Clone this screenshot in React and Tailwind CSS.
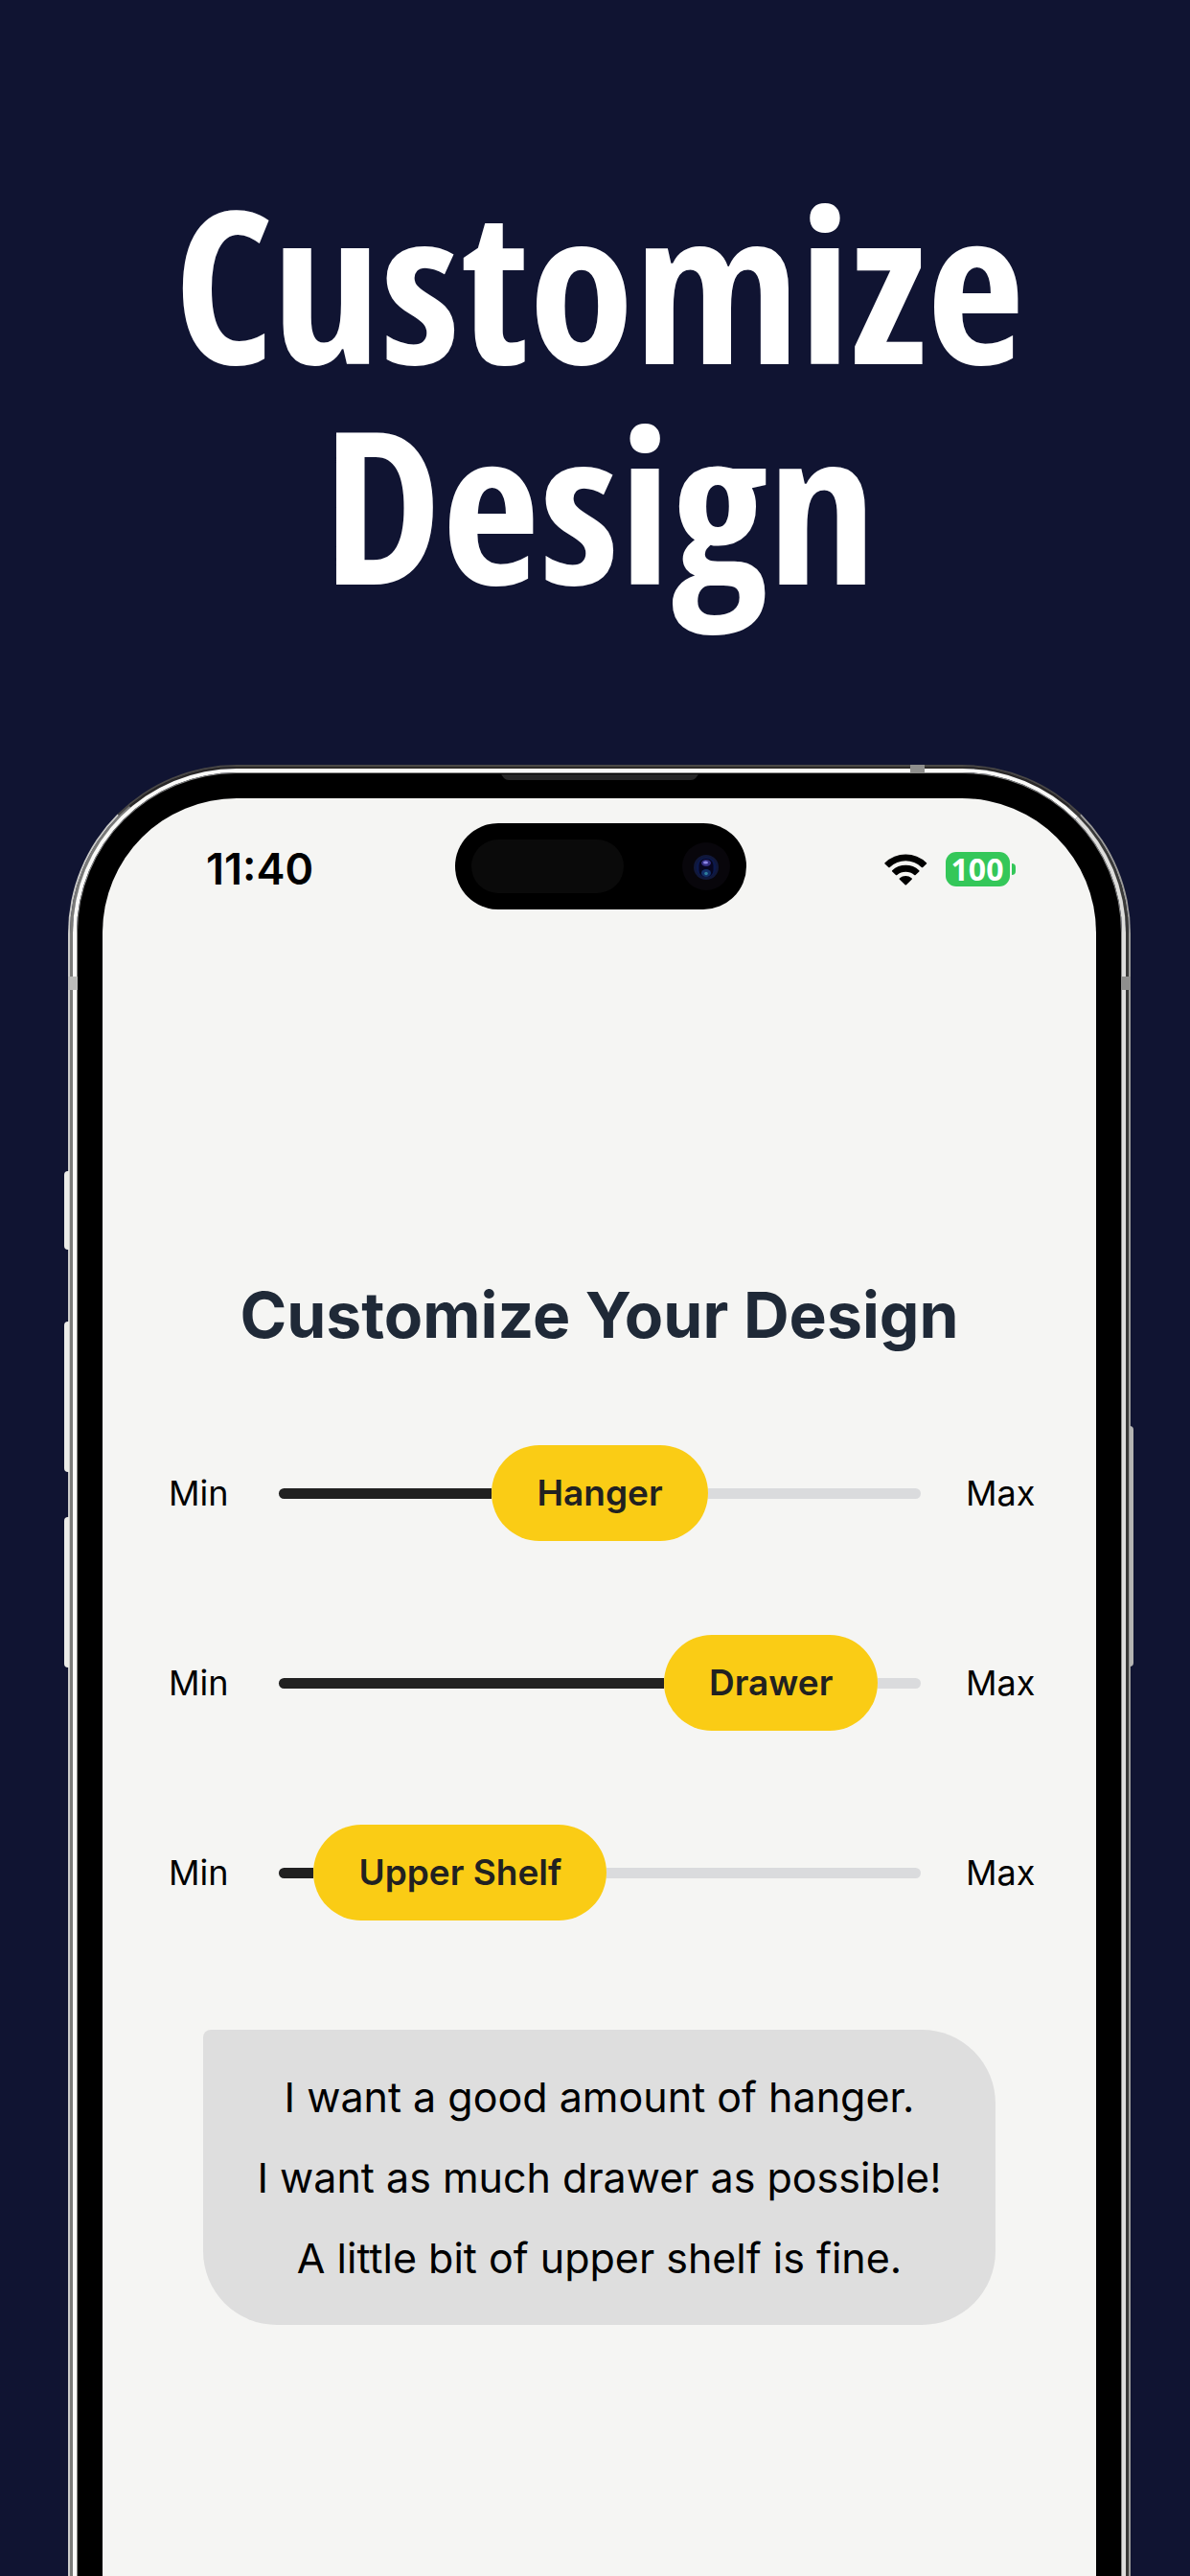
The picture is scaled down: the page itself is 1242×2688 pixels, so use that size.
import React, { useState } from 'react';

const phrases = (name, value) => {
  if (value >= 75) return `I want as much ${name} as possible!`;
  if (value >= 30) return `I want a good amount of ${name}.`;
  return `A little bit of ${name} is fine.`;
};

function WifiIcon() {
  return (
    <svg width="45" height="33" viewBox="0 0 45 33" fill="#000" aria-hidden="true">
      <path d="M0.6 9.2 A31 31 0 0 1 43.9 9.2 Q44.6 9.9 43.9 10.6 L40.2 13.9 Q39.5 14.5 38.8 13.9 A24 24 0 0 0 5.7 13.9 Q5 14.5 4.3 13.9 L0.6 10.6 Q-0.1 9.9 0.6 9.2 Z" />
      <path d="M8.2 17.2 A20.5 20.5 0 0 1 36.3 17.2 Q37 17.9 36.3 18.6 L32.6 21.9 Q31.9 22.5 31.2 21.9 A14 14 0 0 0 13.3 21.9 Q12.6 22.5 11.9 21.9 L8.2 18.6 Q7.5 17.9 8.2 17.2 Z" />
      <path d="M16 25.3 A10 10 0 0 1 28.5 25.3 Q29.3 26 28.6 26.7 L23 32.3 Q22.3 32.9 21.6 32.3 L15.9 26.7 Q15.2 26 16 25.3 Z" />
    </svg>
  );
}

function StatusBar() {
  return (
    <div className="grid grid-cols-[1fr_304px_1fr] items-center pl-[2px]">
      <div className="pt-[6px] pl-[106px] text-[45px] leading-[52px] font-semibold text-black">11:40</div>

      {/* Dynamic island */}
      <div className="flex h-[90px] items-center justify-between rounded-full bg-black px-[17px]">
        <div className="h-[56px] w-[159px] rounded-full bg-[#0a0a0a]"></div>
        <div className="flex size-[50px] items-center justify-center rounded-full bg-[#08060b]">
          <svg width="28" height="28" viewBox="0 0 28 28" aria-hidden="true">
            <circle cx="14" cy="15" r="13" fill="#11183a" />
            <circle cx="14" cy="15" r="10.5" fill="#0c194c" />
            <rect x="6.5" y="6" width="15" height="19" rx="7" fill="#07061f" />
            <ellipse cx="14" cy="10.5" rx="5" ry="3.5" fill="#332e80" />
            <ellipse cx="13.5" cy="10" rx="2.5" ry="1.5" fill="#8d86e6" />
            <ellipse cx="14" cy="21" rx="5" ry="4" fill="#12306a" />
            <circle cx="14" cy="21.5" r="1.8" fill="#2f7f9c" />
          </svg>
        </div>
      </div>

      <div className="flex items-center pt-[6px] pl-[144px]">
        <WifiIcon />
        <div className="ml-[19px] flex items-center gap-[2px]">
          <div className="flex h-[36px] w-[67px] items-center justify-center rounded-[11px] bg-[#34c759] font-['Open_Sans',sans-serif] text-[32px] leading-[36px] font-bold text-white">
            100
          </div>
          <div className="h-[12px] w-[4px] rounded-r-full bg-[#34c759]"></div>
        </div>
      </div>
    </div>
  );
}

function DesignSlider({ id, label, value, onChange }) {
  return (
    <div className="flex items-center text-[36px] leading-[44px] text-black">
      <span className="w-[115px]">Min</span>
      <div className="relative flex flex-1 items-center">
        <div className="h-[11px] rounded-l-full bg-[#212121]" style={{ flexGrow: value, flexBasis: 0 }}></div>
        <label
          htmlFor={id}
          className="flex h-[100px] items-center rounded-[50px] bg-[#facc15] px-[47px] text-[37px] font-semibold text-[#212121]"
        >
          {label}
        </label>
        <div className="h-[11px] rounded-r-full bg-[#dadbdd]" style={{ flexGrow: 100 - value, flexBasis: 0 }}></div>
        <input
          id={id}
          type="range"
          min="0"
          max="100"
          value={value}
          onChange={(e) => onChange(Number(e.target.value))}
          className="absolute inset-0 h-full w-full cursor-pointer opacity-0"
        />
      </div>
      <span className="w-[119px] pl-[47px]">Max</span>
    </div>
  );
}

function App() {
  const [hanger, setHanger] = useState(50);
  const [drawer, setDrawer] = useState(90);
  const [shelf, setShelf] = useState(10);

  return (
    <div className="flex min-h-screen flex-col bg-[#101432] pr-[62px] pl-[71px] font-['Inter',sans-serif]">
      <h1 className="pt-[179px] text-center font-['Open_Sans_Condensed',sans-serif] text-[222px] leading-[230px] font-bold text-white">
        Customize
        <br />
        Design
      </h1>

      {/* Phone, cut off by the bottom of the page */}
      <div className="relative mt-[159px] flex flex-1 flex-col">
        {/* Side buttons */}
        <div className="absolute top-[424px] -left-[4px] h-[82px] w-[5px] rounded-l-[4px] bg-[#ecece8]"></div>
        <div className="absolute top-[581px] -left-[4px] h-[157px] w-[5px] rounded-l-[4px] bg-[#ecece8]"></div>
        <div className="absolute top-[785px] -left-[4px] h-[157px] w-[5px] rounded-l-[4px] bg-[#ecece8]"></div>
        <div className="absolute top-[690px] -right-[3px] h-[251px] w-[4px] rounded-r-[4px] bg-[#b4b4b2]"></div>

        {/* Metal frame, from the outside in */}
        <div className="flex flex-1 flex-col rounded-t-[176px] border-2 border-b-0 border-t-[#4a4846] border-r-[#9c9c9a] border-l-[#cbcbc9]">
          <div className="flex flex-1 flex-col rounded-t-[174px] border-x-[3px] border-t-2 border-t-[#2b2927] border-r-[#3a3a38] border-l-[#7a7a78]">
            <div className="flex flex-1 flex-col rounded-t-[171px] border-4 border-b-0 border-t-[#fafaf8] border-r-[#dededc] border-l-[#fafaf8]">
              <div className="flex flex-1 flex-col rounded-t-[167px] border border-b-0 border-[#8a8a88] bg-black px-[26px] pt-[26px]">
                <main className="flex-1 rounded-t-[140px] bg-[#f5f5f3] pt-[26px] pb-[260px]">
                  <StatusBar />

                  <h2 className="mt-[383px] text-center text-[66px] leading-[80px] font-bold text-[#1f2937]">
                    Customize Your Design
                  </h2>

                  <div className="mt-[96px] flex flex-col gap-[98px] pr-[64px] pl-[69px]">
                    <DesignSlider id="hanger" label="Hanger" value={hanger} onChange={setHanger} />
                    <DesignSlider id="drawer" label="Drawer" value={drawer} onChange={setDrawer} />
                    <DesignSlider id="upper-shelf" label="Upper Shelf" value={shelf} onChange={setShelf} />
                  </div>

                  <div className="mx-[105px] mt-[114px] rounded-[77px] rounded-tl-[8px] bg-[#dedede] py-[28px] text-center text-[43px] leading-[84px] text-black">
                    <p>{phrases('hanger', hanger)}</p>
                    <p>{phrases('drawer', drawer)}</p>
                    <p>{phrases('upper shelf', shelf)}</p>
                  </div>
                </main>
              </div>
            </div>
          </div>
        </div>

        {/* Antenna bands */}
        <div className="absolute top-0 right-[215px] h-[8px] w-[15px] bg-[#8f8f8d]"></div>
        <div className="absolute top-[221px] left-0 h-[14px] w-[10px] bg-[#bcbcba]"></div>
        <div className="absolute top-[221px] right-0 h-[14px] w-[10px] bg-[#8f8f8d]"></div>

        {/* Earpiece */}
        <svg className="absolute top-[10px] left-1/2 -translate-x-1/2" width="206" height="6" viewBox="0 0 206 6" aria-hidden="true">
          <path d="M0 0 H206 L203 4 Q201 6 198 6 H8 Q5 6 3 4 Z" fill="#262626" />
        </svg>
      </div>
    </div>
  );
}

export default App;
